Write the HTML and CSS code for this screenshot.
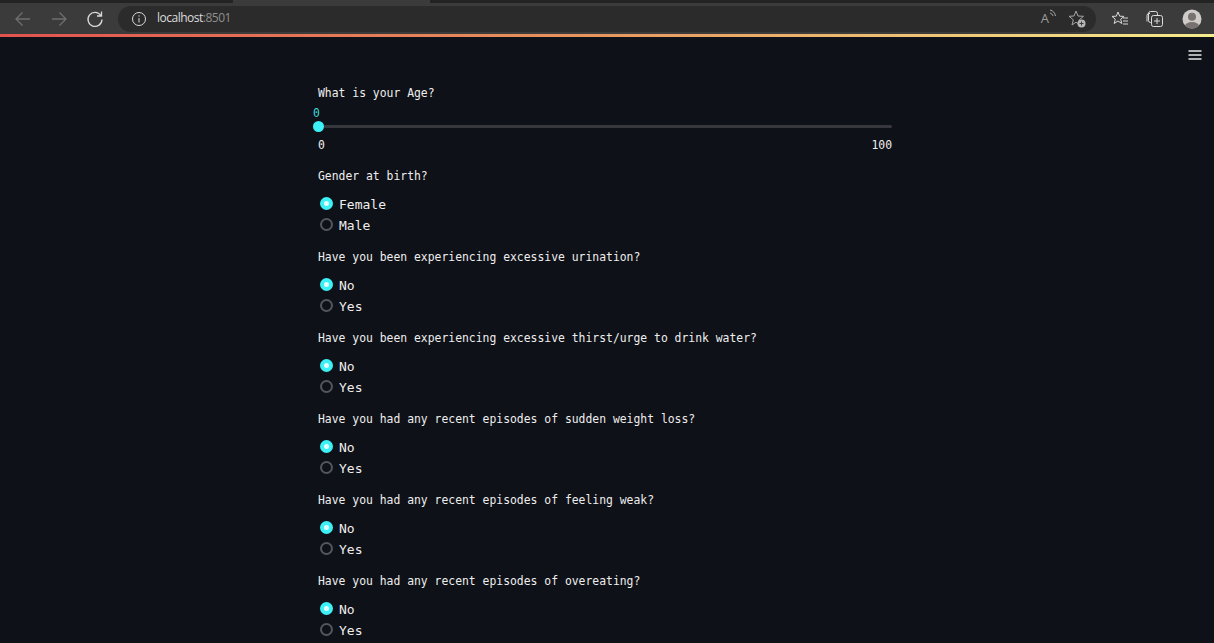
FILE: index.html
```html
<!DOCTYPE html>
<html lang="en">
<head>
<meta charset="utf-8">
<title>localhost:8501</title>
<link rel="stylesheet" href="styles.css">
</head>
<body>
<div class="tabstrip"><div class="tab"></div></div>
<header class="toolbar">
  <svg class="ico" width="20" height="20" viewBox="0 0 20 20"><path d="M17 10H3.500M9.500 3.500 3 10l6.500 6.500" class="dim"/></svg>
  <svg class="ico fwd" width="20" height="20" viewBox="0 0 20 20"><path d="M3 10h13.500M10.500 3.500 17 10l-6.500 6.500" class="dim"/></svg>
  <svg class="ico reload" width="20" height="20" viewBox="0 0 20 20"><path d="M15.800 6.500A7 7 0 1 0 17 10.500M16.500 2.500v4.500H12" class="lit"/></svg>
  <div class="omnibox">
    <svg width="16" height="16" viewBox="0 0 16 16" class="info"><circle cx="8" cy="8" r="6.500" class="lit thin"/><path d="M8 7v4.500M8 4.300v1.400" class="lit thin"/></svg>
    <span class="host">localhost</span><span class="port">:8501</span>
    <span class="spacer"></span>
    <span class="readaloud">A<svg width="8" height="10" viewBox="0 0 8 10"><path d="M1 1c3 .5 5 3 5.500 6M1 4c1.500.3 2.500 1.500 3 3" class="grey"/></svg></span>
    <svg width="20" height="20" viewBox="0 0 20 20" class="favadd"><path d="M9 2l2 5 5.500.3-4.200 3.500L13 16l-4-2.800L5 16l1.300-5.200L2 7.300 7 7z" class="grey"/><circle cx="14.500" cy="14.500" r="4" fill="#b5b5b5"/><path d="M14.500 12.500v4M12.500 14.500h4" stroke="#3b3b3b" stroke-width="1" fill="none"/></svg>
  </div>
  <svg width="18" height="18" viewBox="0 0 18 18" class="favs"><path d="M7 2l1.700 4.200 4.300.2-3.300 2.800 1.100 4.300L7 11l-3.800 2.500 1.100-4.300L1 6.400l4.300-.2zM12 8h5M12 11h5M12 14h5" class="lit thin"/></svg>
  <svg width="18" height="18" viewBox="0 0 18 18" class="coll"><path d="M4 3.500H3a2 2 0 0 0-2 2v6" class="lit thin"/><rect x="2.500" y="1.500" width="9" height="11" rx="2" class="lit thin"/><rect x="5.500" y="5.500" width="11" height="11" rx="2" fill="#3b3b3b" stroke="#dcdcdc"/><path d="M11 8v6M8 11h6" class="lit thin"/></svg>
  <svg width="20" height="20" viewBox="0 0 20 20" class="avatar"><defs><clipPath id="av"><circle cx="10" cy="10" r="9.500"/></clipPath></defs><circle cx="10" cy="10" r="9.500" fill="#cfcbc8"/><g clip-path="url(#av)" fill="#77716f"><circle cx="10" cy="7.800" r="4"/><ellipse cx="10" cy="18" rx="7.500" ry="5"/></g></svg>
</header>
<div class="rainbow"></div>

<main class="app">
  <button class="menu" aria-label="Menu"><svg width="14" height="10" viewBox="0 0 14 10"><path d="M.5 1h13M.5 5h13M.5 9h13" stroke="#e6e6e6" stroke-width="1.500" fill="none"/></svg></button>
  <div class="form">
    <section class="slider">
      <p class="q">What is your Age?</p>
      <span class="value">0</span>
      <div class="track"><span class="thumb"></span></div>
      <div class="ends"><span>0</span><span>100</span></div>
    </section>
    <section class="group"><p class="q">Gender at birth?</p><div class="opt on"><i></i>Female</div><div class="opt"><i></i>Male</div></section>
    <section class="group"><p class="q">Have you been experiencing excessive urination?</p><div class="opt on"><i></i>No</div><div class="opt"><i></i>Yes</div></section>
    <section class="group"><p class="q">Have you been experiencing excessive thirst/urge to drink water?</p><div class="opt on"><i></i>No</div><div class="opt"><i></i>Yes</div></section>
    <section class="group"><p class="q">Have you had any recent episodes of sudden weight loss?</p><div class="opt on"><i></i>No</div><div class="opt"><i></i>Yes</div></section>
    <section class="group"><p class="q">Have you had any recent episodes of feeling weak?</p><div class="opt on"><i></i>No</div><div class="opt"><i></i>Yes</div></section>
    <section class="group"><p class="q">Have you had any recent episodes of overeating?</p><div class="opt on"><i></i>No</div><div class="opt"><i></i>Yes</div></section>
  </div>
</main>
</body>
</html>
```
FILE: styles.css
```css
* { box-sizing: border-box; }
body {
  margin: 0;
  height: 643px;
  overflow: hidden;
  display: flex;
  flex-direction: column;
  background: #0e1117;
  font-family: "DejaVu Sans Mono", monospace;
  color: #eeeeee;
}
.tabstrip { flex: none; height: 3px; background: #232323; padding-left: 233px; }
.tab { width: 197px; height: 3px; background: #3b3b3b; }
.toolbar {
  flex: none;
  height: 31px;
  background: #3b3b3b;
  display: flex;
  align-items: center;
  padding-left: 13px;
}
.dim { fill: none; stroke: #6f6f6f; stroke-width: 1.300; }
.lit { fill: none; stroke: #dadada; stroke-width: 1.300; }
.thin { stroke-width: 1; }
.grey { fill: none; stroke: #a5a5a5; stroke-width: 1; }
.ico { flex: none; }
.fwd { margin-left: 16px; }
.reload { margin-left: 16px; }
.omnibox {
  flex: none;
  width: 978px;
  height: 26px;
  margin-left: 13px;
  border-radius: 13px;
  background: #2b2b2b;
  display: flex;
  align-items: center;
  padding: 0 9px 2px 13px;
  font: 12px "Open Sans", sans-serif;
}
.omnibox > svg { margin-top: 2px; }
.info { margin-right: 10px; flex: none; }
.host { color: #dcdcdc; letter-spacing: -0.500px; }
.port { color: #8f8f8f; letter-spacing: -0.500px; }
.spacer { flex: 1; }
.readaloud { display: flex; color: #9a9a9a; font-size: 13px; align-items: flex-start; margin-right: 10px; }
.favadd { margin-right: 0; flex: none; }
.favs { margin-left: 15px; flex: none; }
.coll { margin-left: 17px; flex: none; }
.avatar { margin-left: 18px; flex: none; }
.rainbow {
  flex: none;
  height: 3px;
  background: linear-gradient(90deg, #e2534f 0%, #e8985e 50%, #f5ec8c 100%);
}
.app { flex: 1; position: relative; padding: 48px 0 0 318px; }
.menu {
  position: absolute;
  top: 13px;
  right: 12px;
  width: 14px;
  height: 10px;
  padding: 0;
  border: 0;
  background: none;
  display: flex;
}
.form { width: 574px; display: flex; flex-direction: column; }
.q { margin: 0; font-size: 11.400px; line-height: 16px; white-space: pre; }
.slider { height: 83px; }
.value { display: block; font-size: 11.400px; line-height: 12px; margin: 6px 0 0 -5px; color: #3fd8dc; }
.track { height: 3px; margin-top: 6px; background: #35373d; border-radius: 2px; position: relative; }
.thumb {
  position: absolute;
  left: -5px;
  top: -4px;
  width: 11px;
  height: 11px;
  border-radius: 50%;
  background: #3df0f5;
}
.ends { display: flex; justify-content: space-between; font-size: 11.400px; line-height: 14px; margin-top: 10px; }
.group { height: 81px; }
.q + .opt { margin-top: 10px; }
.opt {
  display: flex;
  align-items: center;
  height: 21px;
  font-size: 13px;
  gap: 6px;
  padding-left: 2px;
}
.opt i {
  flex: none;
  width: 13px;
  height: 13px;
  margin-bottom: 2px;
  border-radius: 50%;
  border: 2px solid #55565c;
}
.opt.on i { border: 4px solid #3df0f5; background: #e4fdfe; }
```
